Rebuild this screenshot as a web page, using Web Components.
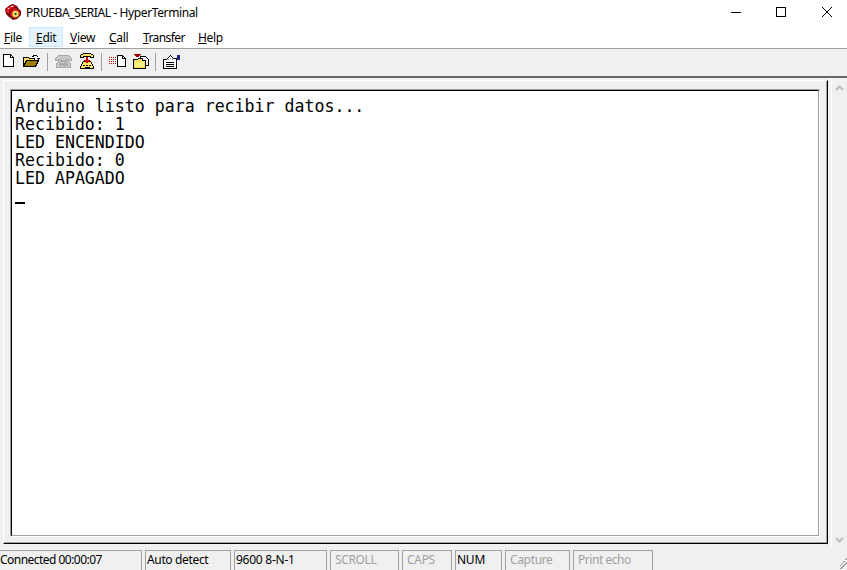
<!DOCTYPE html>
<html>
<head>
<meta charset="utf-8">
<title>PRUEBA_SERIAL - HyperTerminal</title>
<style>
    html, body { margin: 0; padding: 0; background: #f0f0f0; }
    body { width: 847px; height: 570px; overflow: hidden; font: 12px "Noto Sans", sans-serif; color: #000; }
</style>
</head>
<body>
<ht-window>
    <ht-titlebar title-text="PRUEBA_SERIAL - HyperTerminal"></ht-titlebar>
    <ht-menubar></ht-menubar>
    <ht-toolbar></ht-toolbar>
    <ht-client>
        <ht-terminal>Arduino listo para recibir datos...
Recibido: 1
LED ENCENDIDO
Recibido: 0
LED APAGADO</ht-terminal>
    </ht-client>
    <ht-statusbar></ht-statusbar>
</ht-window>

<script>
class HtWindow extends HTMLElement {
    constructor() {
        super();
        this.attachShadow({ mode: 'open' });
        this.shadowRoot.innerHTML = `
            <style>
                :host { display: flex; flex-direction: column; width: 847px; height: 570px; background: #f0f0f0; }
            </style>
            <slot></slot>`;
    }
}

class HtTitlebar extends HTMLElement {
    constructor() {
        super();
        this.attachShadow({ mode: 'open' });
        this.shadowRoot.innerHTML = `
            <style>
                :host { display: flex; align-items: flex-start; height: 26px; background: #fff; flex: none; }
                svg { display: block; flex: none; }
                .logo { margin: 4px 0 0 5px; }
                .text { margin-left: 5px; flex: 1; white-space: nowrap; line-height: 25px; letter-spacing: -0.39px; }
                .btn { width: 46px; height: 24px; display: flex; align-items: center; justify-content: center; flex: none; box-sizing: border-box; }
                .btn.first { padding-left: 2px; }
                .btn.last { width: 43px; padding-left: 3px; }
            </style>
            <svg class="logo" width="16" height="16" viewBox="0 0 16 16">
                <path fill="#6a0508" d="M0 5L5 1l3-1 4 2 2 3 2 2v4l-4 4-4 1-4-3-3-3z"/>
                <path fill="#f01c24" d="M1 5l4-3 3-1 3 1-3 2-3 2-1 4-2-1z"/>
                <path fill="#e0141c" d="M6 7l3-3 3 1 3 3v2l-4 4H8l-3-3z"/>
                <circle cx="10.5" cy="10" r="3.2" fill="#eee060"/>
                <circle cx="10.5" cy="10" r="1.1" fill="#282828"/>
                <path fill="#fff" d="M3 4h1v1H3zM6 2h2v1H6z"/>
                <path fill="#505050" d="M5 13h2v1H5zM13 5h1v1h-1z"/>
            </svg>
            <span class="text">${this.getAttribute('title-text')}</span>
            <div class="btn first"><svg width="10" height="10" viewBox="0 0 10 10" shape-rendering="crispEdges"><path d="M0 5h10v1H0z"/></svg></div>
            <div class="btn"><svg width="10" height="10" viewBox="0 0 10 10" shape-rendering="crispEdges"><path fill="none" stroke="#000" d="M.5.5h9v9h-9z"/></svg></div>
            <div class="btn last"><svg width="10" height="10" viewBox="0 0 10 10"><path fill="none" stroke="#000" stroke-width="1" d="M0 0l10 10M10 0L0 10"/></svg></div>`;
    }
}

class HtMenubar extends HTMLElement {
    constructor() {
        super();
        this.attachShadow({ mode: 'open' });
        const items = [
            ['F', 'ile', 29, 4, -0.3], ['E', 'dit', 34, 7, -0.3], ['V', 'iew', 39, 7, -0.3],
            ['C', 'all', 34, 7, -0.3], ['T', 'ransfer', 55, 7, -0.6], ['H', 'elp', 39, 7, -0.3]
        ];
        this.shadowRoot.innerHTML = `
            <style>
                :host { display: flex; height: 21px; background: #fff; flex: none; padding-top: 1px; box-sizing: content-box; }
                .item { box-sizing: border-box; height: 20px; line-height: 21px; white-space: nowrap; flex: none; }
                .item.on { background: #e5f3ff; border: 1px solid #cce8ff; line-height: 19px; }
                u { text-underline-offset: 1px; }
            </style>
            ${items.map((it, i) => `<div class="item${i === 1 ? ' on' : ''}" style="width:${it[2]}px;padding-left:${i === 1 ? it[3] - 1 : it[3]}px;letter-spacing:${it[4]}px"><u>${it[0]}</u>${it[1]}</div>`).join('')}`;
    }
}

class HtToolbar extends HTMLElement {
    constructor() {
        super();
        this.attachShadow({ mode: 'open' });
        this.shadowRoot.innerHTML = `
            <style>
                :host { display: flex; align-items: flex-start; height: 27px; background: #f0f0f0; flex: none;
                        border-top: 1px solid #a0a0a0; border-bottom: 2px solid #696969; box-sizing: content-box; }
                svg { display: block; flex: none; }
                .sep { width: 1px; height: 18px; background: #a0a0a0; flex: none; margin-top: 4px; }
            </style>
            <svg style="margin:5px 0 0 3px" width="12" height="14" viewBox="0 0 12 14" shape-rendering="crispEdges">
                <path fill="#fff" stroke="#000" d="M.5.5h7l3 3v9h-10z"/><path fill="none" stroke="#000" d="M7.5.5v3h3"/>
            </svg>
            <svg style="margin:5px 0 0 8px" width="17" height="14" viewBox="0 0 17 14" shape-rendering="crispEdges">
                <path fill="#ffe060" stroke="#000" d="M.5 3.5h5l1 1h5v2h-8l-3 6z"/>
                <path fill="#a08000" stroke="#000" d="M3.5 6.5h12l-3 6h-12z"/>
                <path fill="none" stroke="#000" d="M9.5 2.5l2-1h2l2 2"/><path d="M14 4h3l-1 2h-1z"/>
            </svg>
            <div class="sep" style="margin-left:7px"></div>
            <svg style="margin:6px 0 0 7px" width="17" height="13" viewBox="0 0 17 13" shape-rendering="crispEdges">
                <path fill="#c8c8c8" stroke="#a8a8a8" d="M3.5.5h10l3 3v2h-3v-1h-2v1h-6v-1h-2v1h-3v-2zM3.5 6.5h10l2 2v4h-14v-4z"/>
                <path fill="#909090" d="M5 8h1v1H5zM7 8h1v1H7zM9 8h1v1H9zM11 8h1v1h-1zM4 9h1v1H4zM6 9h1v1H6zM8 9h1v1H8zM10 9h1v1h-1zM12 9h1v1h-1zM5 10h1v1H5zM7 10h1v1H7zM9 10h1v1H9zM11 10h1v1h-1z"/>
            </svg>
            <svg style="margin:4px 0 0 8px" width="14" height="17" viewBox="0 0 14 17" shape-rendering="crispEdges">
                <path fill="#ffe860" stroke="#000" d="M3.5 8.5h7l3 5v2h-13v-2z"/>
                <path fill="#ffe860" stroke="#000" d="M3.5.5h7l3 2v2h-3v-1h-7v1H.5v-2z"/>
                <path fill="#000" d="M3 12h2v1H3zM6 12h2v1H6zM9 12h2v1H9zM5 14h5v1H5z"/>
                <path fill="#d00000" d="M6 4h2v5H6zM4 7h6v1H4zM5 8h4v1H5zM6 9h2v1H6z"/>
            </svg>
            <div class="sep" style="margin-left:7px"></div>
            <svg style="margin:6px 0 0 7px" width="17" height="13" viewBox="0 0 17 13" shape-rendering="crispEdges">
                <path fill="#c00000" d="M0 2h1v1H0zM2 2h1v1H2zM4 2h1v1H4zM6 2h1v1H6zM0 4h1v1H0zM2 4h1v1H2zM4 4h1v1H4zM6 4h1v1H6zM0 6h1v1H0zM2 6h1v1H2zM4 6h1v1H4zM6 6h1v1H6zM0 8h1v1H0zM2 8h1v1H2zM4 8h1v1H4zM6 8h1v1H6z"/>
                <path fill="#fff" stroke="#000" d="M8.5.5h5l3 3v8h-8z"/><path fill="none" stroke="#000" d="M13.5.5v3h3"/>
            </svg>
            <svg style="margin:5px 0 0 7px" width="16" height="16" viewBox="0 0 16 16" shape-rendering="crispEdges">
                <path fill="#a00000" d="M1 0h7v1H7v1H6v1H3V2H2V1H1z"/>
                <path fill="#fff" stroke="#000" d="M7.5 2.5h5l3 3v6h-8z"/>
                <path fill="#ffe060" stroke="#000" d="M.5 5.5h4l1-1h4v2h3v8h-12z"/>
                <path fill="#f8f080" d="M2 8h9v5H2z"/>
            </svg>
            <div class="sep" style="margin-left:6px"></div>
            <svg style="margin:5px 0 0 7px" width="17" height="16" viewBox="0 0 17 16" shape-rendering="crispEdges">
                <path fill="#fff" stroke="#000" d="M.5 5.5h3l4-4 3 3h3v10h-13z"/>
                <path fill="#202080" d="M14 1h3v5h-3z"/>
                <path fill="#000" d="M3 8h8v1H3zM3 10h8v1H3zM3 12h8v1H3z"/>
                <path fill="#808080" d="M5 5h1v1H5zM7 4h1v1H7zM9 5h1v1H9z"/>
            </svg>`;
    }
}

class HtClient extends HTMLElement {
    constructor() {
        super();
        this.attachShadow({ mode: 'open' });
        this.shadowRoot.innerHTML = `
            <style>
                :host { display: flex; flex: 1; min-height: 0; background: #f0f0f0; }
                .frame { width: 825px; flex: none; box-sizing: border-box; margin: 2px 0 4px 3px; display: flex; background: #f0f0f0;
                         border: 1px solid; border-color: #fff #000 #000 #fff; box-shadow: inset -1px -1px 0 #a0a0a0; padding: 8px 7px 6px 6px; }
                .bar { width: 16px; flex: none; display: flex; flex-direction: column; justify-content: space-between; align-items: center;
                       box-sizing: border-box; padding: 7px 0 4px 0; border-left: 1px solid #fff; margin-left: 3px; height: 469px; }
                svg { display: block; }
            </style>
            <div class="frame"><slot></slot></div>
            <div class="bar">
                <svg width="9" height="6" viewBox="0 0 9 6"><path fill="none" stroke="#bdbdbd" stroke-width="2" d="M1 5l3.5-3.5L8 5"/></svg>
                <svg width="9" height="6" viewBox="0 0 9 6"><path fill="none" stroke="#bdbdbd" stroke-width="2" d="M1 1l3.5 3.5L8 1"/></svg>
            </div>`;
    }
}

class HtTerminal extends HTMLElement {
    constructor() {
        super();
        this.attachShadow({ mode: 'open' });
        this.shadowRoot.innerHTML = `
            <style>
                :host { display: block; flex: 1; box-sizing: border-box; background: #fff; border: 1px solid; border-color: #a0a0a0 #fff #fff #a0a0a0;
                        overflow: hidden; }
                .in { height: 100%; box-sizing: border-box; border: 1px solid; border-color: #000 #a0a0a0 #a0a0a0 #000; padding: 6px 0 0 3px; overflow: hidden; }
                pre { margin: 0; font: 18.1px/18px "DejaVu Sans Mono", monospace; color: #000; transform: scaleX(.9163); transform-origin: 0 0; }
                .cursor { width: 10px; height: 2px; background: #000; margin-top: 15px; }
            </style>
            <div class="in">
                <pre><slot></slot></pre>
                <div class="cursor"></div>
            </div>`;
    }
}

class HtStatusbar extends HTMLElement {
    constructor() {
        super();
        this.attachShadow({ mode: 'open' });
        const panes = [
            ['Connected 00:00:07', 142, 0, 0, -0.53], ['Auto detect', 86, 0, 1, -0.35], ['9600 8-N-1', 93, 0, 1, -0.25],
            ['SCROLL', 69, 1, 4, -0.35], ['CAPS', 50, 1, 4, -0.3], ['NUM', 47, 0, 1, -0.25],
            ['Capture', 65, 1, 4, -0.35], ['Print echo', 80, 1, 4, -0.45]
        ];
        this.shadowRoot.innerHTML = `
            <style>
                :host { display: flex; gap: 3px; height: 20px; flex: none; position: relative; padding-top: 2px; box-sizing: content-box; background: #f0f0f0; overflow: hidden; }
                .pane { box-sizing: border-box; height: 24px; border: 1px solid #a0a0a0; line-height: 18px; white-space: nowrap; flex: none; }
                .pane.first { border-left: 0; }
                .off { color: #a0a0a0; }
                .grip { position: absolute; right: 0; bottom: 0; }
            </style>
            ${panes.map((p, i) => `<div class="pane${i === 0 ? ' first' : ''}${p[2] ? ' off' : ''}" style="width:${p[1]}px;padding-left:${p[3]}px;letter-spacing:${p[4]}px">${p[0]}</div>`).join('')}
            <svg class="grip" width="12" height="12" viewBox="0 0 12 12" shape-rendering="crispEdges">
                <path fill="#a0a0a0" d="M11 0h1v2h-2V1h1zM8 3h2v1H9v1H8v1H7v1H6v1H5V7h1V6h1V5h1zM11 4h1v2h-1v1h-1v1H9v1H8v1H7v1H5v-1h1V9h1V8h1V7h1V6h1V5h1z"/>
            </svg>`;
    }
}

customElements.define('ht-window', HtWindow);
customElements.define('ht-titlebar', HtTitlebar);
customElements.define('ht-menubar', HtMenubar);
customElements.define('ht-toolbar', HtToolbar);
customElements.define('ht-client', HtClient);
customElements.define('ht-terminal', HtTerminal);
customElements.define('ht-statusbar', HtStatusbar);
</script>
</body>
</html>
